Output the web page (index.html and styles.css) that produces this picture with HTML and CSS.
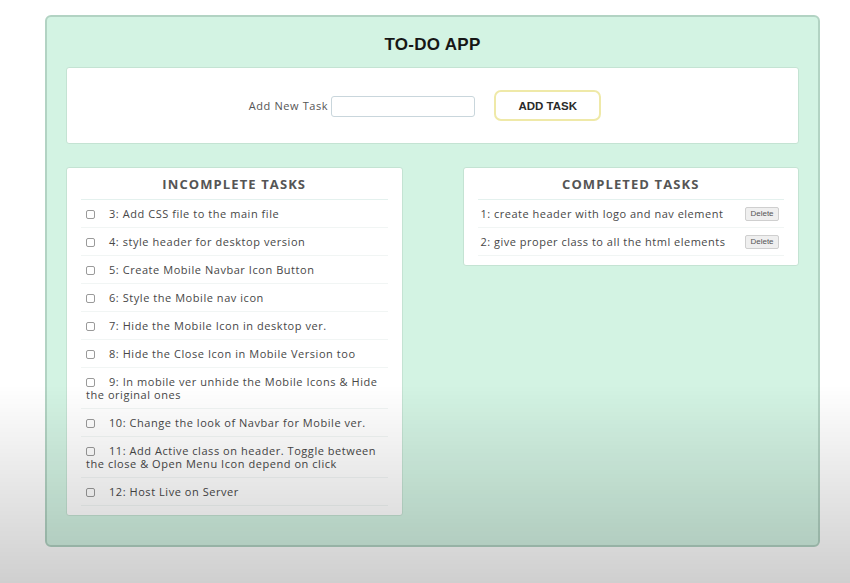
FILE: index.html
```html
<!DOCTYPE html>
<html lang="en">
<head>
<meta charset="utf-8">
<title>To-Do App</title>
<link rel="stylesheet" href="styles.css">
</head>
<body>
<div class="app">
  <h1 class="title">TO-DO APP</h1>
  <div class="add-box">
    <label class="add-label" for="new-task">Add New Task</label>
    <input class="add-input" id="new-task" type="text">
    <button class="add-btn">ADD TASK</button>
  </div>
  <div class="columns">
    <section class="card">
      <h2 class="card-title">INCOMPLETE TASKS</h2>
      <ul class="task-list">
        <li class="task"><input class="check" type="checkbox"><span class="task-text">3: Add CSS file to the main file</span></li>
        <li class="task"><input class="check" type="checkbox"><span class="task-text">4: style header for desktop version</span></li>
        <li class="task"><input class="check" type="checkbox"><span class="task-text">5: Create Mobile Navbar Icon Button</span></li>
        <li class="task"><input class="check" type="checkbox"><span class="task-text">6: Style the Mobile nav icon</span></li>
        <li class="task"><input class="check" type="checkbox"><span class="task-text">7: Hide the Mobile Icon in desktop ver.</span></li>
        <li class="task"><input class="check" type="checkbox"><span class="task-text">8: Hide the Close Icon in Mobile Version too</span></li>
        <li class="task"><input class="check" type="checkbox"><span class="task-text">9: In mobile ver unhide the Mobile Icons &amp; Hide the original ones</span></li>
        <li class="task"><input class="check" type="checkbox"><span class="task-text">10: Change the look of Navbar for Mobile ver.</span></li>
        <li class="task"><input class="check" type="checkbox"><span class="task-text">11: Add Active class on header. Toggle between the close &amp; Open Menu Icon depend on click</span></li>
        <li class="task"><input class="check" type="checkbox"><span class="task-text">12: Host Live on Server</span></li>
      </ul>
    </section>
    <section class="card">
      <h2 class="card-title">COMPLETED TASKS</h2>
      <ul class="task-list">
        <li class="done"><span class="done-text">1: create header with logo and nav element</span><button class="del-btn">Delete</button></li>
        <li class="done"><span class="done-text">2: give proper class to all the html elements</span><button class="del-btn">Delete</button></li>
      </ul>
    </section>
  </div>
</div>
</body>
</html>
```
FILE: styles.css
```css
html, body {
  margin: 0;
  padding: 0;
}
body {
  background: #ffffff;
  font-family: "Open Sans", "Liberation Sans", sans-serif;
  height: 583px;
  overflow: hidden;
}
body::after {
  content: "";
  position: fixed;
  left: 0;
  top: 0;
  right: 0;
  bottom: 0;
  pointer-events: none;
  background: linear-gradient(to bottom, rgba(0,0,0,0) 0, rgba(0,0,0,0) 385px, rgba(0,0,0,0.19) 583px);
}
.app {
  box-sizing: border-box;
  width: 775px;
  margin: 15px 0 0 45px;
  height: 532px;
  background: #d3f3e3;
  border: 2px solid #b2d3c3;
  border-radius: 6px;
  padding: 19px 19px 0;
}
.title {
  margin: 0 0 13px;
  text-align: center;
  font-family: "Liberation Sans", Arial, sans-serif;
  font-weight: 700;
  font-size: 17px;
  letter-spacing: 0.3px;
  line-height: 18px;
  color: #161616;
}
.add-box {
  height: 77px;
  box-sizing: border-box;
  background: #ffffff;
  border: 1px solid #c4e3d3;
  border-radius: 3px;
  display: flex;
  align-items: center;
  justify-content: center;
}
.add-label {
  font-size: 11px;
  letter-spacing: 0.6px;
  color: #555;
  margin-right: 3px;
}
.add-input {
  box-sizing: border-box;
  width: 144px;
  height: 21px;
  border: 1px solid #c9d6dc;
  border-radius: 3px;
  margin: 1px 19px 0 0;
  padding: 0 4px;
}
.add-btn {
  box-sizing: border-box;
  width: 107px;
  height: 31px;
  margin-right: 15px;
  background: #ffffff;
  border: 2px solid #efe9a8;
  border-radius: 7px;
  font-family: "Liberation Sans", Arial, sans-serif;
  font-weight: 700;
  font-size: 11.5px;
  color: #2a2a2a;
}
.columns {
  display: flex;
  align-items: flex-start;
  gap: 60px;
  margin-top: 23px;
}
.card {
  flex: 1;
  background: #ffffff;
  border: 1px solid #c4e3d3;
  border-radius: 3px;
  padding: 8px 14px 9px;
}
.card-title {
  margin: 0;
  text-align: center;
  font-size: 13px;
  line-height: 17px;
  font-weight: 700;
  letter-spacing: 1.1px;
  color: #555;
  padding-bottom: 6px;
  border-bottom: 1px solid #e4f1ee;
}
.task-list {
  list-style: none;
  margin: 0;
  padding: 0;
}
.task {
  padding: 7px 5px;
  font-size: 11px;
  line-height: 13px;
  letter-spacing: 0.55px;
  color: #474747;
  border-bottom: 1px solid #f1f5f4;
}
.check {
  appearance: none;
  -webkit-appearance: none;
  box-sizing: border-box;
  width: 9px;
  height: 9px;
  margin: 0 14px 0 0;
  border: 1px solid #9a9a9a;
  border-radius: 2px;
  vertical-align: -1px;
  background: #fff;
}
.done {
  display: flex;
  align-items: center;
  justify-content: space-between;
  box-sizing: border-box;
  height: 28px;
  padding: 0 5px 0 3px;
  font-size: 11px;
  letter-spacing: 0.5px;
  color: #474747;
  border-bottom: 1px solid #f1f5f4;
}
.del-btn {
  box-sizing: border-box;
  width: 34px;
  height: 14px;
  padding: 0;
  font-family: "Liberation Sans", Arial, sans-serif;
  font-size: 8px;
  color: #555;
  background: #efefef;
  border: 1px solid #cfcfcf;
  border-radius: 2px;
}
```
